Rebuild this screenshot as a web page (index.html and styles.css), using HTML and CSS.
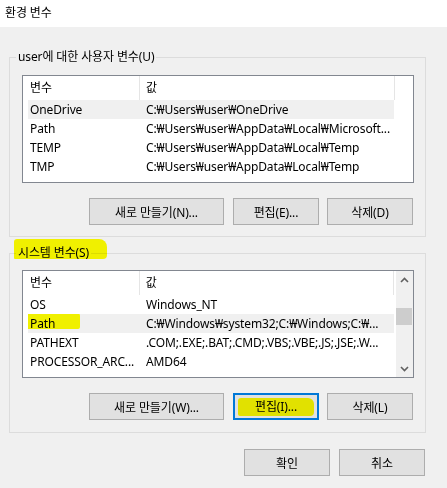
FILE: index.html
```html
<!DOCTYPE html>
<html lang="ko">
<head>
<meta charset="utf-8">
<title>환경 변수</title>
<link rel="stylesheet" href="styles.css">
</head>
<body>
<div class="titlebar">환경 변수</div>
<div class="client">
  <fieldset class="group group-user">
    <legend class="legend">user에 대한 사용자 변수(U)</legend>
    <div class="list">
      <div class="list-main">
        <div class="list-header">
          <div class="hcell hname">변수</div>
          <div class="hcell hvalue">값</div>
        </div>
        <div class="row selected"><span class="cname">OneDrive</span><span class="cvalue">C:₩Users₩user₩OneDrive</span></div>
        <div class="row"><span class="cname">Path</span><span class="cvalue">C:₩Users₩user₩AppData₩Local₩Microsoft...</span></div>
        <div class="row"><span class="cname">TEMP</span><span class="cvalue">C:₩Users₩user₩AppData₩Local₩Temp</span></div>
        <div class="row"><span class="cname">TMP</span><span class="cvalue">C:₩Users₩user₩AppData₩Local₩Temp</span></div>
      </div>
    </div>
    <div class="buttons">
      <button class="btn btn-wide">새로 만들기(N)...</button>
      <button class="btn">편집(E)...</button>
      <button class="btn">삭제(D)</button>
    </div>
  </fieldset>

  <fieldset class="group group-system">
    <legend class="legend legend-marked">시스템 변수(S)</legend>
    <div class="list">
      <div class="list-main">
        <div class="list-header">
          <div class="hcell hname">변수</div>
          <div class="hcell hvalue">값</div>
        </div>
        <div class="row"><span class="cname">OS</span><span class="cvalue">Windows_NT</span></div>
        <div class="row selected"><span class="cname marked">Path</span><span class="cvalue">C:₩Windows₩system32;C:₩Windows;C:₩...</span></div>
        <div class="row"><span class="cname">PATHEXT</span><span class="cvalue">.COM;.EXE;.BAT;.CMD;.VBS;.VBE;.JS;.JSE;.W...</span></div>
        <div class="row"><span class="cname">PROCESSOR_ARC...</span><span class="cvalue">AMD64</span></div>
      </div>
      <div class="scrollbar">
        <div class="sb-arrow">
          <svg width="9" height="6" viewBox="0 0 9 6"><polyline points="1,5 4.5,1.5 8,5" fill="none" stroke="#606060" stroke-width="1.6"/></svg>
        </div>
        <div class="sb-track"><div class="sb-thumb"></div></div>
        <div class="sb-arrow">
          <svg width="9" height="6" viewBox="0 0 9 6"><polyline points="1,1 4.5,4.5 8,1" fill="none" stroke="#606060" stroke-width="1.6"/></svg>
        </div>
      </div>
    </div>
    <div class="buttons">
      <button class="btn btn-wide">새로 만들기(W)...</button>
      <button class="btn btn-focus"><span class="marked-btn">편집(I)...</span></button>
      <button class="btn">삭제(L)</button>
    </div>
  </fieldset>

  <div class="dialog-buttons">
    <button class="btn">확인</button>
    <button class="btn">취소</button>
  </div>
</div>
</body>
</html>
```

FILE: styles.css
```css
html, body {
  margin: 0;
  padding: 0;
}

body {
  width: 447px;
  height: 488px;
  overflow: hidden;
  background: #f0f0f0;
  font-family: "Noto Sans", "Noto Sans CJK KR", sans-serif;
  font-size: 12px;
  letter-spacing: -0.12px;
  color: #000;
}

.titlebar {
  height: 27px;
  line-height: 25px;
  padding-left: 5px;
  background: #fff;
}

.client {
  padding: 22px 21px 0 9px;
}

.group {
  margin: 0;
  min-width: 0;
  border: 1px solid #dcdcdc;
  padding: 10px 11px 11px 12px;
}

.group-system {
  margin-top: 8px;
  padding-top: 9px;
  padding-bottom: 12px;
}

.legend {
  margin-left: -6px;
  padding: 0 2px;
  line-height: 16px;
}

.legend-marked {
  position: relative;
}

.legend-marked::before {
  content: "";
  position: absolute;
  left: -2px;
  top: -6px;
  width: 93px;
  height: 20px;
  background: #ffff00;
  mix-blend-mode: multiply;
  border-radius: 3px 8px 4px 1px;
}

.list {
  display: flex;
  height: 108px;
  box-sizing: border-box;
  border: 1px solid #828790;
  background: #fff;
  overflow: hidden;
}

.list-main {
  flex: 1;
  min-width: 0;
}

.list-header {
  display: flex;
  height: 24px;
  line-height: 24px;
}

.hcell {
  box-sizing: border-box;
  border-right: 1px solid #e5e5e5;
  white-space: nowrap;
}

.hname {
  width: 117px;
  padding-left: 7px;
}

.hvalue {
  width: 255px;
  padding-left: 6px;
}

.row {
  display: flex;
  width: 366px;
  margin-left: 5px;
  height: 19px;
  line-height: 19px;
  white-space: nowrap;
}

.row.selected {
  background: #f0f0f0;
}

.cname {
  box-sizing: border-box;
  width: 111px;
  padding-left: 2px;
  overflow: hidden;
}

.cvalue {
  box-sizing: border-box;
  width: 255px;
  padding: 0 6px 0 7px;
  overflow: hidden;
}

.marked {
  position: relative;
}

.marked::after {
  content: "";
  position: absolute;
  left: -8px;
  top: -1px;
  width: 60px;
  height: 16px;
  background: #ffff00;
  mix-blend-mode: multiply;
  border-radius: 1px 3px 2px 1px;
}

.scrollbar {
  width: 17px;
  display: flex;
  flex-direction: column;
  background: #f0f0f0;
  margin-left: 2px;
}

.sb-arrow {
  height: 17px;
  display: flex;
  align-items: center;
  justify-content: center;
}

.sb-track {
  flex: 1;
}

.sb-thumb {
  margin: 20px 1px 0 0;
  height: 17px;
  background: #cdcdcd;
}

.buttons {
  display: flex;
  justify-content: flex-end;
  gap: 9px;
  margin-top: 15px;
  padding-right: 1px;
}

.buttons .btn + .btn + .btn {
  margin-left: -1px;
}

.btn {
  box-sizing: border-box;
  width: 86px;
  height: 27px;
  padding: 0;
  margin: 0;
  background: #e1e1e1;
  border: 1px solid #adadad;
  border-radius: 0;
  font: inherit;
  letter-spacing: inherit;
  color: #000;
}

.btn-wide {
  width: 135px;
}

.btn-focus {
  border: 2px solid #0078d7;
}

.marked-btn {
  display: inline-block;
  width: 76px;
  line-height: 18px;
  background: #e1e100;
  border-radius: 3px 6px 4px 2px;
}

.dialog-buttons {
  display: flex;
  justify-content: flex-end;
  gap: 9px;
  margin-top: 16px;
  padding-right: 1px;
}
```
